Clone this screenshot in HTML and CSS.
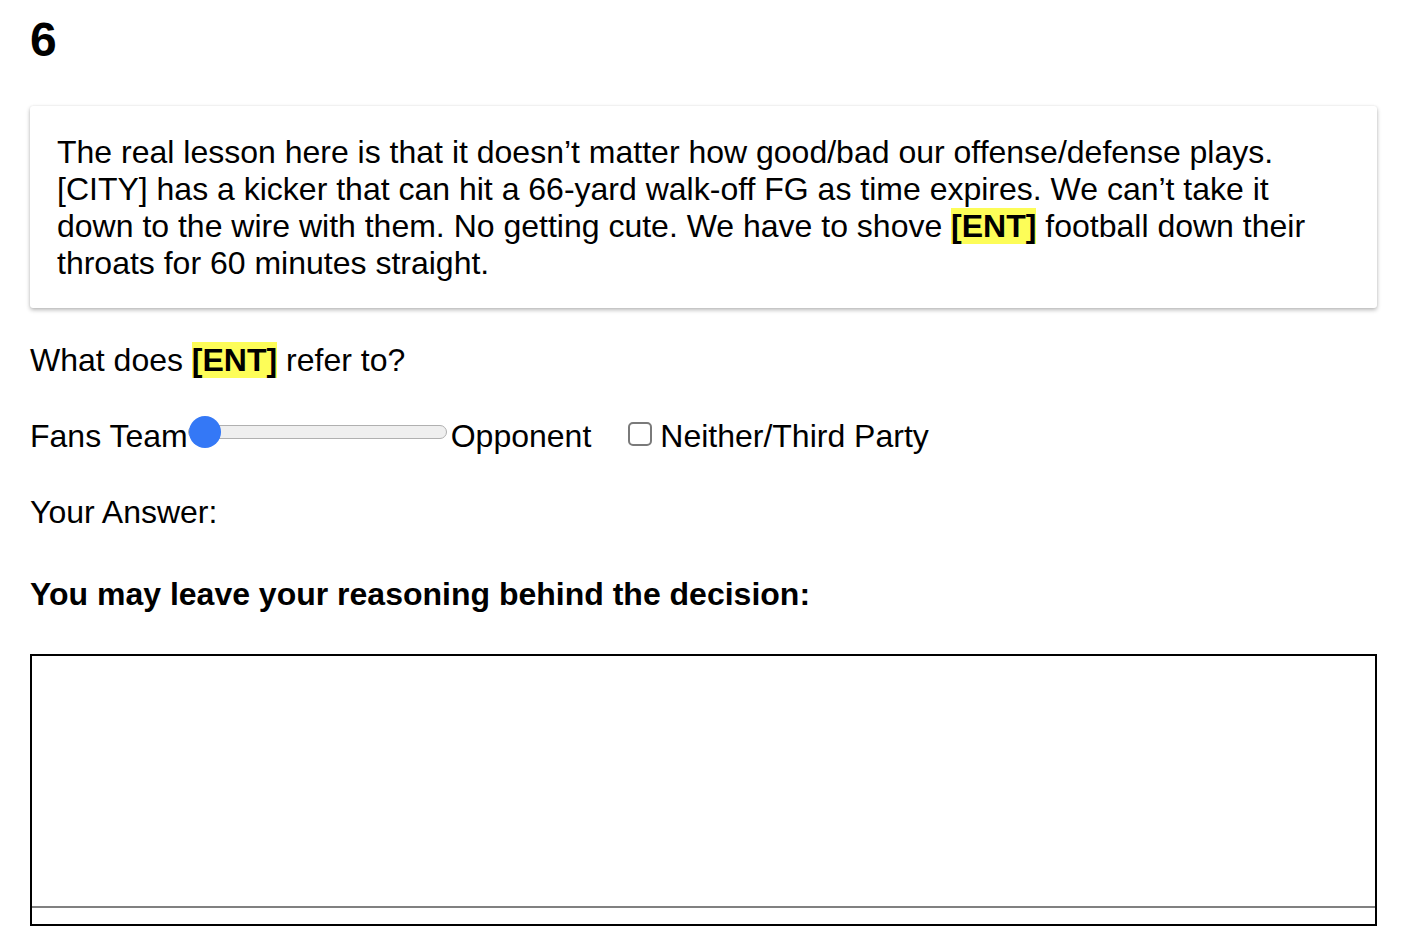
FILE: index.html
```html
<!DOCTYPE html>
<html lang="en">
<head>
<meta charset="utf-8">
<title>Question 6</title>
<link rel="stylesheet" href="styles.css">
</head>
<body>
<main class="page">
  <h1 class="qnum">6</h1>
  <section class="card">
    <p class="passage">The real lesson here is that it doesn’t matter how good/bad our offense/defense plays. [CITY] has a kicker that can hit a 66-yard walk-off FG as time expires. We can’t take it down to the wire with them. No getting cute. We have to shove <mark class="ent">[ENT]</mark> football down their throats for 60 minutes straight.</p>
  </section>
  <p class="question">What does <mark class="ent">[ENT]</mark> refer to?</p>
  <div class="choice-row">
    <span class="label">Fans Team</span>
    <input class="slider" type="range" min="0" max="100" value="0">
    <span class="label">Opponent</span>
    <label class="neither"><input class="check" type="checkbox"><span>Neither/Third Party</span></label>
  </div>
  <p class="answer">Your Answer:</p>
  <p class="reason">You may leave your reasoning behind the decision:</p>
  <div class="answer-box">
    <textarea class="reason-input"></textarea>
  </div>
</main>
</body>
</html>
```

FILE: styles.css
```css
html, body {
  margin: 0;
  padding: 0;
  background: #fff;
}

body {
  font-family: "Liberation Sans", Arial, Helvetica, sans-serif;
  font-size: 32px;
  color: #000;
}

.page {
  padding: 0 29px 0 30px;
}

.qnum {
  margin: 12px 0 0;
  font-size: 48px;
  font-weight: bold;
  line-height: 55px;
}

.card {
  margin-top: 39px;
  padding: 28px 27px 26px;
  background: #fff;
  border-radius: 3px;
  box-shadow: 0 2px 4px rgba(0, 0, 0, 0.28), 0 0 2px rgba(0, 0, 0, 0.08);
}

.passage {
  margin: 0;
  line-height: 37px;
}

.ent {
  background: #fdfd58;
  color: #000;
  font-weight: bold;
}

.question {
  margin: 34px 0 0;
  line-height: 37px;
}

.choice-row {
  margin-top: 39px;
  height: 37px;
  display: flex;
  align-items: center;
  line-height: 37px;
}

.slider {
  -webkit-appearance: none;
  appearance: none;
  width: 259px;
  height: 32px;
  margin: -10px 4px 0 0;
  padding: 0;
  background: transparent;
}

.slider::-webkit-slider-runnable-track {
  height: 14px;
  background: #efefef;
  border: 1px solid #b0b0b0;
  border-radius: 8px;
  box-sizing: border-box;
}

.slider::-webkit-slider-thumb {
  -webkit-appearance: none;
  appearance: none;
  width: 32px;
  height: 32px;
  border-radius: 50%;
  background: #3478f6;
  border: none;
  margin-top: -10px;
}

.neither {
  display: flex;
  align-items: center;
  margin-left: 37px;
}

.check {
  -webkit-appearance: none;
  appearance: none;
  width: 24px;
  height: 24px;
  margin: -5px 8px 0 0;
  border: 2px solid #7a7a7a;
  border-radius: 5px;
  background: #fff;
  box-sizing: border-box;
}

.answer {
  margin: 39px 0 0;
  line-height: 37px;
}

.reason {
  margin: 45px 0 0;
  font-weight: bold;
  line-height: 37px;
}

.answer-box {
  margin-top: 41px;
  border: 2px solid #000;
  padding-bottom: 16px;
}

.reason-input {
  display: block;
  width: 100%;
  height: 252px;
  margin: 0;
  padding: 0;
  border: none;
  border-bottom: 2px solid #808080;
  box-sizing: border-box;
  resize: none;
  outline: none;
  font: inherit;
}
```
